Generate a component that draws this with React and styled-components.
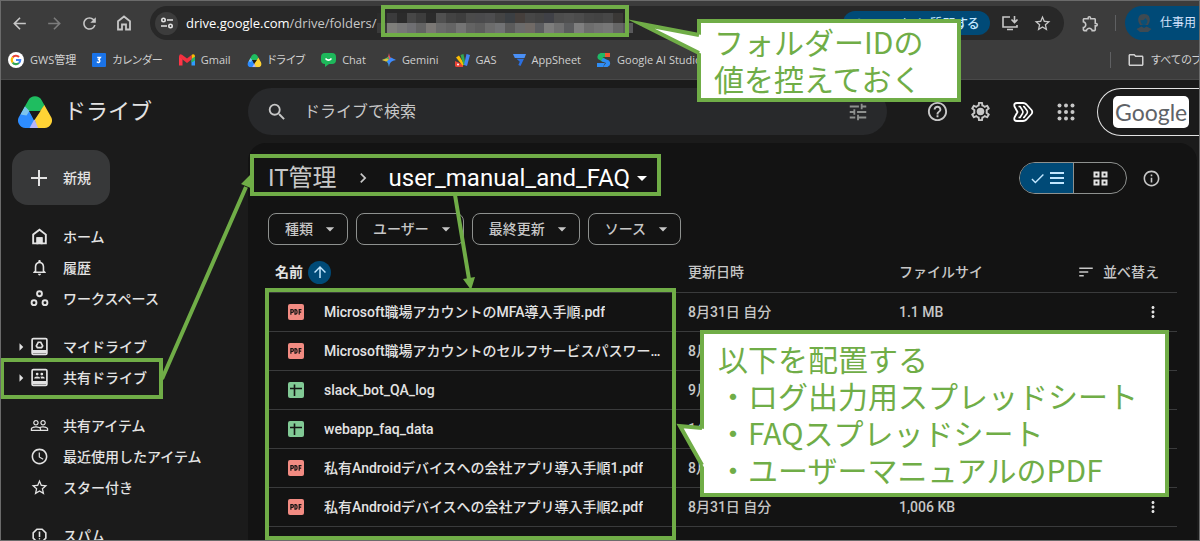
import styled, { createGlobalStyle } from "styled-components";
import {
  MdAccessTime,
  MdArrowBack,
  MdArrowDropDown,
  MdArrowForward,
  MdArrowRight,
  MdArrowUpward,
  MdCheck,
  MdChevronRight,
  MdHelpOutline,
  MdMoreVert,
  MdNotificationsNone,
  MdOutlineExtension,
  MdOutlineFolder,
  MdOutlineInfo,
  MdOutlineReport,
  MdOutlineSettings,
  MdPeopleOutline,
  MdRefresh,
  MdSearch,
  MdSort,
  MdStarOutline,
  MdTune,
} from "react-icons/md";

const GREEN = "#70ad47";

const DriveLogo = ({ size }) => (
  <svg width={size} height={size} viewBox="0 0 36 36" aria-hidden="true">
    <clipPath id={`drive${size}`}>
      <path d="M11.500 6a7.500 7.500 0 0 1 13 0l9.300 16.500A7.500 7.500 0 0 1 27.500 34h-19A7.500 7.500 0 0 1 2.200 22.500z" />
    </clipPath>
    <g clipPath={`url(#drive${size})`}>
      <path d="M0 0h36v8l-8 3-5 6H5z" fill="#1fbd60" />
      <path d="M0 17h12.500l9 19H0z" fill="#2d8cff" />
      <path d="M7.500 12l5 5-3 4.500-6-1z" fill="#7cc4ee" />
      <path d="M28 10l10 15v11H20.500L17.500 25z" fill="#ffd335" />
      <path d="M17.500 25l4 10H12z" fill="#b6b5fa" />
      <path d="M12 17h11.500l-6 9z" fill="#1b1b1b" />
    </g>
  </svg>
);

const GoogleMark = () => (
  <svg width="16" height="16" viewBox="0 0 24 24" aria-hidden="true">
    <circle cx="12" cy="12" r="12" fill="#fff" />
    <g fill="none" strokeWidth="3.200">
      <path d="M7 8.200A6.300 6.300 0 0 1 16.500 7.500" stroke="#ea4335" />
      <path d="M7 15.800a6.300 6.300 0 0 1 0-7.600" stroke="#fbbc04" />
      <path d="M16.300 16.600A6.300 6.300 0 0 1 7 15.800" stroke="#34a853" />
      <path d="M12 12h6.300a6.300 6.300 0 0 1-2 4.600" stroke="#4285f4" />
    </g>
  </svg>
);

const CalendarMark = () => (
  <svg width="14" height="14" viewBox="0 0 14 14" aria-hidden="true">
    <rect width="14" height="14" rx="1" fill="#1a73e8" />
    <path d="M5.200 4.500h3L6.700 6.500a1.500 1.500 0 1 1-1.700 2.200" fill="none" stroke="#fff" strokeWidth="1.500" />
  </svg>
);

const GmailMark = () => (
  <svg width="16" height="12" viewBox="0 0 16 12" aria-hidden="true">
    <path d="M0 2v9.500h3.500V5z" fill="#ff3547" />
    <path d="M12.500 5v6.500H16V2z" fill="#2f9bff" />
    <path d="M12.500 5l3.500-2.500v4l-3.500 2z" fill="#25b561" />
    <path d="M12.500 1v4L16 2.500V1.500Q14.500-.5 12.500 1z" fill="#fbbc04" />
    <path d="M0 2.500Q.5-.8 3 .8l5 3.700 4.500-3.500v4.500L8 9 3.500 5.500 0 3z" fill="#f3303f" />
  </svg>
);

const ChatMark = () => (
  <svg width="15" height="14" viewBox="0 0 15 14" aria-hidden="true">
    <path d="M4 0h7q4 0 4 4v3q0 4-4 4H8l-4 3v-3Q0 11 0 7V4q0-4 4-4z" fill="#1eb85b" />
    <path d="M4.500 5.500q3 3.200 6 0" fill="none" stroke="#fff" strokeWidth="1.600" />
  </svg>
);

const GeminiMark = () => (
  <svg width="14" height="14" viewBox="0 0 14 14" aria-hidden="true">
    <path d="M7 0Q7.500 6.500 14 7H0Q6.500 6.500 7 0z" fill="#f0525c" />
    <path d="M0 7Q6.500 7.500 7 14V3.500z" fill="#4dac5f" />
    <path d="M0 7l5-1.500L7 7l-3 1.500z" fill="#e9bd3b" />
    <path d="M14 7Q7.500 7.500 7 14 6.500 10 5 8.500L9 4.500z" fill="#3d8bfd" />
  </svg>
);

const ScriptMark = () => (
  <svg width="15" height="13" viewBox="0 0 15 13" aria-hidden="true">
    <path d="M0 7l8 3.500V13H2Q-.5 13 0 11z" fill="#ea4335" />
    <path d="M1 3.500l3-2 5.500 9-2 1z" fill="#fbbc04" />
    <path d="M5.500 1l3-1 2 10-2 1z" fill="#34a853" />
    <path d="M11.500 0l3.500 1-3 11-3-1z" fill="#4285f4" />
    <circle cx="3" cy="10.500" r="1" fill="#fff" />
  </svg>
);

const AppSheetMark = () => (
  <svg width="13" height="12" viewBox="0 0 13 12" aria-hidden="true">
    <path d="M0 0h13l-1.500 4H1.800z" fill="#4a90f7" />
    <path d="M3.500 4.800H11L7.500 12 5.300 11l1.500-3.200z" fill="#2b6fe0" />
  </svg>
);

const StudioMark = () => (
  <svg width="14" height="14" viewBox="0 0 14 14" aria-hidden="true">
    <path d="M3.500 0H13v4H5.500L9 6.500 6 9 1 6Q-1 2 3.500 0z" fill="#1fb866" />
    <path d="M8 0h5v4H8z" fill="#f0562f" />
    <path d="M6 5l6 2.500q3 4-1.500 6.500H6l3-4-5-2z" fill="#2f8df5" />
    <path d="M0 10h8l-2 4H0z" fill="#2f8df5" />
  </svg>
);

const HomeOutline = ({ size, filledDoor }) => (
  <svg width={size} height={size} viewBox="0 0 18 18" fill="none" stroke="currentColor" strokeWidth="1.800" aria-hidden="true">
    <path d="M3 7.200 9 2.500l6 4.700V15.500H11V10.500H7V15.500H3z" />
    {filledDoor && <path d="M7 10.500h4v5H7z" fill="currentColor" />}
  </svg>
);

const SiteSettings = () => (
  <svg width="14" height="14" viewBox="0 0 14 14" fill="none" stroke="currentColor" strokeWidth="1.600" aria-hidden="true">
    <circle cx="3.500" cy="4" r="1.700" />
    <path d="M7 4h6M1 10h6" />
    <circle cx="10.500" cy="10" r="1.700" />
  </svg>
);

const InstallIcon = () => (
  <svg width="18" height="16" viewBox="0 0 18 16" fill="none" stroke="currentColor" strokeWidth="1.600" aria-hidden="true">
    <path d="M9 2H2v10h14v-2M6 14.500h6M13.500 1v6M10.500 4.500l3 3 3-3" />
  </svg>
);

const Workspaces = () => (
  <svg width="18" height="18" viewBox="0 0 18 18" fill="none" stroke="currentColor" strokeWidth="1.800" aria-hidden="true">
    <circle cx="9" cy="4.500" r="2.300" />
    <circle cx="3.800" cy="13" r="2.300" />
    <circle cx="14.200" cy="13" r="2.300" />
  </svg>
);

const DriveBox = ({ shared }) => (
  <svg width="18" height="18" viewBox="0 0 18 18" fill="none" stroke="currentColor" strokeWidth="1.600" aria-hidden="true">
    <rect x="2" y="1.500" width="14" height="15" rx="1.200" />
    <path d="M2 13h14M2 14.500h14" />
    {shared ? (
      <g fill="currentColor" stroke="none">
        <circle cx="6.800" cy="5.800" r="1.300" />
        <circle cx="11.200" cy="5.800" r="1.300" />
        <path d="M4 10q0-2 2.800-2t2.800 2zM10.400 10q0-1.200-.6-1.700 4.200-1 4.200 1.700z" />
      </g>
    ) : (
      <path d="M7.800 5h2.400L12 8.500 11 10H7L6 8.500z" />
    )}
  </svg>
);

const GearIcon = () => (
  <svg width="23" height="23" viewBox="0 0 24 24" fill="currentColor" aria-hidden="true">
    <MdOutlineSettings size={24} stroke="currentColor" />
    <circle cx="12" cy="12" r="3.500" />
  </svg>
);

const LabsIcon = () => (
  <svg width="22" height="22" viewBox="0 0 22 22" fill="none" stroke="currentColor" strokeWidth="1.800" strokeLinejoin="round" aria-hidden="true">
    <path d="M5 2h6q2 0 3.500 1.500l5 5.500q1.500 2 0 4l-5 5.500Q13 20 11 20H5q-3.500 0-2.500-3.500L5.500 11 2.500 5.500Q1.500 2 5 2z" />
    <path d="M6.500 5.500h1.500l2.500 4q1 1.500 0 3l-2.500 4H6.500M11 5.500h1l3 4q1 1.500 0 3l-3 4h-1" strokeWidth="1.600" />
  </svg>
);

const AppsIcon = () => (
  <svg width="18" height="18" viewBox="0 0 18 18" fill="currentColor" aria-hidden="true">
    {[2.5, 9, 15.5].map((y) =>
      [2.5, 9, 15.5].map((x) => <circle key={`${x}-${y}`} cx={x} cy={y} r="2" />)
    )}
  </svg>
);

const GridIcon = () => (
  <svg width="15" height="15" viewBox="0 0 15 15" fill="none" stroke="currentColor" strokeWidth="2" aria-hidden="true">
    <path d="M1.500 1.500h4v4h-4zM9.500 1.500h4v4h-4zM1.500 9.500h4v4h-4zM9.500 9.500h4v4h-4z" />
  </svg>
);

const ListLines = () => (
  <svg width="14" height="14" viewBox="0 0 14 14" stroke="currentColor" strokeWidth="2" aria-hidden="true">
    <path d="M0 2h14M0 7h14M0 12h14" />
  </svg>
);

const PlusMark = () => (
  <svg width="18" height="18" viewBox="0 0 18 18" stroke="currentColor" strokeWidth="2" aria-hidden="true">
    <path d="M9 1v16M1 9h16" />
  </svg>
);

const Avatar = () => (
  <svg width="18" height="20" viewBox="0 0 18 20" aria-hidden="true">
    <path d="M3.500 9Q2 1 9 1t5.500 8L13 12H5z" fill="#3f4a52" />
    <path d="M5.500 7q3.500 1 5-2 1.500 2 2 2.500Q12 12 9 12T5.500 7z" fill="#0b4f76" />
    <path d="M1.500 16l5-2.500L9 15l2.500-1.500 5 2.500L13 19H5z" fill="#3f4a52" />
  </svg>
);

const PdfIcon = () => (
  <svg width="16" height="16" viewBox="0 0 16 16" role="img" aria-label="PDF">
    <rect width="16" height="16" rx="2" fill="#f28b82" />
    <g fill="none" stroke="#131313" strokeWidth="1.200">
      <path d="M2.900 10.800V5.700h1.500q1 0 1 1.300t-1 1.300H3" />
      <path d="M7 5.700v4.500h.8q1.300 0 1.300-2.200T7.800 5.700z" />
      <path d="M11.200 10.800V5.700h2.300M11.200 8.200h2" />
    </g>
  </svg>
);

const SheetIcon = () => (
  <svg width="16" height="16" viewBox="0 0 16 16" role="img" aria-label="Sheet">
    <rect width="16" height="16" rx="2" fill="#81c995" />
    <path d="M2 6.500h12M6.500 2.500V14" stroke="#131313" strokeWidth="1.600" />
  </svg>
);

const bookmarks = [
  { label: "GWS管理", icon: <GoogleMark /> },
  { label: "カレンダー", icon: <CalendarMark /> },
  { label: "Gmail", icon: <GmailMark /> },
  { label: "ドライブ", icon: <DriveLogo size={15} /> },
  { label: "Chat", icon: <ChatMark /> },
  { label: "Gemini", icon: <GeminiMark /> },
  { label: "GAS", icon: <ScriptMark /> },
  { label: "AppSheet", icon: <AppSheetMark /> },
  { label: "Google AI Studio", icon: <StudioMark /> },
];

const navGroups = [
  [
    { label: "ホーム", icon: <HomeOutline size={18} filledDoor /> },
    { label: "履歴", icon: <MdNotificationsNone /> },
    { label: "ワークスペース", icon: <Workspaces /> },
  ],
  [
    { label: "マイドライブ", icon: <DriveBox />, expandable: true },
    { label: "共有ドライブ", icon: <DriveBox shared />, expandable: true },
  ],
  [
    { label: "共有アイテム", icon: <MdPeopleOutline /> },
    { label: "最近使用したアイテム", icon: <MdAccessTime /> },
    { label: "スター付き", icon: <MdStarOutline /> },
  ],
  [{ label: "スパム", icon: <MdOutlineReport /> }],
];

const files = [
  { name: "Microsoft職場アカウントのMFA導入手順.pdf", type: "pdf", date: "8月31日 自分", size: "1.1 MB" },
  { name: "Microsoft職場アカウントのセルフサービスパスワードリセット手順.pdf", type: "pdf", date: "8月", size: "" },
  { name: "slack_bot_QA_log", type: "sheet", date: "9月", size: "" },
  { name: "webapp_faq_data", type: "sheet", date: "14:02", size: "" },
  { name: "私有Androidデバイスへの会社アプリ導入手順1.pdf", type: "pdf", date: "8月", size: "" },
  { name: "私有Androidデバイスへの会社アプリ導入手順2.pdf", type: "pdf", date: "8月31日 自分", size: "1,006 KB" },
];

const filters = ["種類", "ユーザー", "最終更新", "ソース"];

const mosaicTop = ["#2b2b2b", "#3b3b3c", "#2b2b2b", "#474747", "#3d3d3d", "#2b2b2b", "#505050", "#434343", "#3e3e3e", "#4b4b4b", "#4a4a4c", "#4d4d4f", "#444444", "#3b3f43", "#453f3c", "#474747", "#434343", "#404147", "#4d4d4d", "#505050", "#4c4c4c", "#454545", "#434343", "#474747", "#3a3836"];
const mosaicBottom = ["#3a3a3a", "#7f7f7b", "#777777", "#6f6f72", "#636363", "#7b7875", "#6a6a6a", "#646464", "#747474", "#636363", "#5d5d5d", "#6c6c6c", "#717274", "#5b5b5b", "#6b6b6b", "#706a66", "#5c5d60", "#7d7d7c", "#707070", "#5b5c5e", "#7f7f7f", "#6d6d6d", "#737373", "#777777", "#666666", "#59595b"];

const Mosaic = () => (
  <svg width="256" height="20" viewBox="0 0 26 2" preserveAspectRatio="none" shapeRendering="crispEdges" aria-hidden="true">
    {mosaicTop.map((color, i) => (
      <rect key={i} x={i} y="0" width="1" height="1" fill={color} />
    ))}
    {mosaicBottom.map((color, i) => (
      <rect key={i} x={i} y="1" width="1" height="1" fill={color} />
    ))}
  </svg>
);

const Browser = () => (
  <BrowserBar>
    <AddressRow>
      <NavButtons>
        <IconButton aria-label="戻る"><MdArrowBack /></IconButton>
        <IconButton aria-label="進む" $dim><MdArrowForward /></IconButton>
        <IconButton aria-label="再読み込み"><MdRefresh /></IconButton>
        <IconButton aria-label="ホーム"><HomeOutline size={18} /></IconButton>
      </NavButtons>
      <AddressBox>
        <SiteButton aria-label="サイト情報"><SiteSettings /></SiteButton>
        <Url><b>drive.google.com</b>/drive/folders/</Url>
        <Mosaic />
        <Spacer />
        <AskChip><MdSearch />Google に質問する</AskChip>
        <IconButton aria-label="インストール"><InstallIcon /></IconButton>
        <IconButton aria-label="ブックマーク"><MdStarOutline /></IconButton>
      </AddressBox>
      <Extensions>
        <IconButton aria-label="拡張機能"><MdOutlineExtension /></IconButton>
        <Divider />
      </Extensions>
      <Profile><Avatar />仕事用</Profile>
    </AddressRow>
    <BookmarkRow>
      {bookmarks.map((item) => (
        <Bookmark href="#" key={item.label}>{item.icon}{item.label}</Bookmark>
      ))}
      <Spacer />
      <Divider />
      <AllBookmarks href="#"><MdOutlineFolder />すべてのブックマーク</AllBookmarks>
    </BookmarkRow>
  </BrowserBar>
);

const TopBar = () => (
  <Header>
    <Brand href="#"><DriveLogo size={36} />ドライブ</Brand>
    <SearchBox>
      <MdSearch />
      <input aria-label="ドライブで検索" placeholder="ドライブで検索" />
      <MdTune color="#8e918f" />
    </SearchBox>
    <HeaderTools>
      <IconButton aria-label="サポート" $size={23}><MdHelpOutline /></IconButton>
      <IconButton aria-label="設定"><GearIcon /></IconButton>
      <IconButton aria-label="Labs" $bright><LabsIcon /></IconButton>
      <IconButton aria-label="アプリ"><AppsIcon /></IconButton>
    </HeaderTools>
    <Account><span>Google</span></Account>
  </Header>
);

const SideNav = () => (
  <Sidebar>
    <NewButton><PlusMark />新規</NewButton>
    {navGroups.map((group, i) => (
      <NavGroup key={i}>
        {group.map((item) => (
          <NavItem href="#" key={item.label}>
            <Expander>{item.expandable && <MdArrowRight />}</Expander>
            {item.icon}
            {item.label}
          </NavItem>
        ))}
      </NavGroup>
    ))}
  </Sidebar>
);

const FileList = () => (
  <Panel>
    <PathRow>
      <Crumb>IT管理</Crumb>
      <MdChevronRight />
      <Crumb $current>user_manual_and_FAQ<MdArrowDropDown /></Crumb>
      <Spacer />
      <ViewToggle>
        <ViewButton $active aria-label="リスト"><MdCheck /><ListLines /></ViewButton>
        <ViewButton aria-label="グリッド"><GridIcon /></ViewButton>
      </ViewToggle>
      <IconButton aria-label="詳細"><MdOutlineInfo /></IconButton>
    </PathRow>
    <FilterRow>
      {filters.map((label) => (
        <FilterChip key={label}>{label}<MdArrowDropDown /></FilterChip>
      ))}
    </FilterRow>
    <Table>
      <colgroup>
        <col />
        <col width="211" />
        <col width="168" />
        <col width="110" />
      </colgroup>
      <thead>
        <tr>
          <th><HeadCell $bright>名前<SortBadge><MdArrowUpward /></SortBadge></HeadCell></th>
          <th>更新日時</th>
          <th>ファイルサイ</th>
          <th><HeadCell $end><MdSort />並べ替え</HeadCell></th>
        </tr>
      </thead>
      <tbody>
        {files.map((file) => (
          <tr key={file.name}>
            <td>
              <FileName>
                {file.type === "pdf" ? <PdfIcon /> : <SheetIcon />}
                <span>{file.name}</span>
              </FileName>
            </td>
            <td>{file.date}</td>
            <td>{file.size}</td>
            <td><RowMenu aria-label="その他の操作"><MdMoreVert /></RowMenu></td>
          </tr>
        ))}
      </tbody>
    </Table>
  </Panel>
);

const Notes = () => (
  <>
    <Mark $x={381} $y={5} $w={248} $h={32} />
    <Mark $x={250} $y={154} $w={411} $h={42} />
    <Mark $x={0} $y={358} $w={163} $h={41} />
    <Mark $x={265} $y={288} $w={411} $h={252} />
    <Callout $x={697} $y={19} $w={264} $h={83}>
      フォルダーIDの
      <br />
      値を控えておく
    </Callout>
    <Callout $x={700} $y={330} $w={469} $h={167} $roomy>
      以下を配置する
      <br />
      ・ログ出力用スプレッドシート
      <br />
      ・FAQスプレッドシート
      <br />
      ・ユーザーマニュアルのPDF
    </Callout>
    <Lines width="1200" height="541" aria-hidden="true">
      <g stroke={GREEN} strokeWidth="4">
        <path d="M162 379L246 187M455 195l14 84" />
      </g>
      <g fill={GREEN}>
        <path d="M251 174l-10 10 12 5zM471 290l-8-11 12-2z" />
      </g>
      <g fill="#fff">
        <path d="M702 35L640 24 702 54zM705 429L680 426 705 469z" />
      </g>
      <g fill="none" stroke={GREEN} strokeWidth="4" strokeMiterlimit="10">
        <path d="M699 35L641 24 699 53" />
        <path d="M702 428L680 426 702 465" />
      </g>
    </Lines>
  </>
);

const App = () => (
  <Screen>
    <GlobalStyle />
    <Browser />
    <TopBar />
    <Body>
      <SideNav />
      <FileList />
    </Body>
    <Notes />
  </Screen>
);

export default App;

const GlobalStyle = createGlobalStyle`
  * {
    box-sizing: border-box;
  }
  body {
    margin: 0;
    background-color: #1b1b1b;
    font-family: Roboto, "Noto Sans CJK JP", sans-serif;
    font-size: 14px;
    line-height: 20px;
    color: #e3e3e3;
  }
  button, input {
    font: inherit;
    color: inherit;
    border: 0;
    padding: 0;
    background: none;
  }
  a {
    color: inherit;
    text-decoration: none;
  }
  svg {
    flex: none;
  }
`;

const Screen = styled.div`
  position: relative;
  display: flex;
  flex-direction: column;
  height: 100vh;
  overflow: hidden;
  border: 1px solid #6b6b6b;
`;

const Spacer = styled.div`
  flex: 1;
`;

const IconButton = styled.button`
  display: flex;
  align-items: center;
  justify-content: center;
  width: 24px;
  height: 24px;
  font-size: ${({ $size }) => $size || 19}px;
  color: ${({ $dim, $bright }) => ($dim ? "#7c7c7c" : $bright ? "#fff" : "#c7c7c7")};
`;

const Divider = styled.div`
  width: 1px;
  height: 16px;
  background-color: #5f6062;
`;

const BrowserBar = styled.div`
  flex: none;
  background-color: #3c3c3c;
  font-family: "Open Sans", "Noto Sans CJK JP", sans-serif;
  border-bottom: 1px solid #484848;
`;

const AddressRow = styled.div`
  display: flex;
  align-items: center;
  height: 44px;
  padding-left: 6px;
`;

const NavButtons = styled.div`
  display: flex;
  gap: 11px;
  margin-right: 14px;
`;

const AddressBox = styled.div`
  flex: 1;
  display: flex;
  align-items: center;
  height: 34px;
  padding: 0 10px 0 5px;
  gap: 8px;
  border-radius: 17px;
  background-color: #282828;
  & > svg {
    margin-left: -7px;
  }
`;

const SiteButton = styled.button`
  display: flex;
  align-items: center;
  justify-content: center;
  width: 23px;
  height: 23px;
  border-radius: 50%;
  color: #e3e3e3;
  background-color: #3c3c3c;
`;

const Url = styled.span`
  font-size: 13px;
  color: #c7c7c7;
  & > b {
    font-weight: 400;
    color: #fff;
  }
`;

const AskChip = styled.button`
  display: flex;
  align-items: center;
  height: 24px;
  padding: 0 11px;
  gap: 4px;
  border-radius: 12px;
  font-size: 13px;
  font-weight: 500;
  color: #c2e7ff;
  background-color: #004a77;
  font-feature-settings: "palt";
`;

const Extensions = styled.div`
  display: flex;
  align-items: center;
  gap: 13px;
  margin: 0 9px 0 14px;
`;

const Profile = styled.button`
  display: flex;
  align-items: center;
  height: 34px;
  width: 74px;
  padding-left: 10px;
  gap: 7px;
  white-space: nowrap;
  font-size: 12px;
  color: #d3e3fd;
  border-radius: 17px 0 0 17px;
  background-color: #004a77;
`;

const BookmarkRow = styled.nav`
  display: flex;
  align-items: center;
  height: 34px;
  padding: 0 0 4px 7px;
  gap: 16px;
  overflow: hidden;
  font-size: 11px;
  color: #d0d0d0;
`;

const Bookmark = styled.a`
  display: flex;
  align-items: center;
  gap: 6px;
  white-space: nowrap;
  font-feature-settings: "palt";
`;

const AllBookmarks = styled(Bookmark)`
  width: 72px;
  overflow: hidden;
  & > svg {
    font-size: 18px;
  }
`;

const Header = styled.header`
  flex: none;
  display: flex;
  align-items: center;
  height: 63px;
  padding-left: 16px;
`;

const Brand = styled.a`
  display: flex;
  align-items: center;
  width: 231px;
  gap: 11px;
  font-size: 22px;
`;

const SearchBox = styled.label`
  flex: 1;
  display: flex;
  align-items: center;
  height: 47px;
  padding: 0 18px;
  border-radius: 24px;
  font-size: 22px;
  color: #c7c7c7;
  background-color: #28292b;
  & > input {
    flex: 1;
    min-width: 0;
    margin-left: 16px;
    font-size: 16px;
  }
  & > input::placeholder {
    color: #c7c7c7;
  }
`;

const HeaderTools = styled.div`
  display: flex;
  gap: 19px;
  margin: 0 19px 0 38px;
`;

const Account = styled.div`
  display: flex;
  align-items: center;
  width: 102px;
  height: 48px;
  padding-left: 15px;
  border: 1px solid #e3e3e3;
  border-right: 0;
  border-radius: 24px 0 0 24px;
  & > span {
    padding: 0 2px;
    border-radius: 5px;
    font-family: Lato, sans-serif;
    font-size: 23px;
    line-height: 32px;
    color: #5f6368;
    background-color: #fff;
  }
`;

const Body = styled.div`
  flex: 1;
  display: flex;
  min-height: 0;
`;

const Sidebar = styled.nav`
  width: 247px;
  padding: 7px 11px 0;
`;

const NewButton = styled.button`
  display: flex;
  align-items: center;
  width: 98px;
  height: 55px;
  padding-left: 18px;
  gap: 15px;
  margin-bottom: 16px;
  border-radius: 16px;
  font-weight: 500;
  background-color: #373839;
`;

const NavGroup = styled.div`
  margin-bottom: 17px;
`;

const NavItem = styled.a`
  display: flex;
  align-items: center;
  height: 31px;
  font-weight: 500;
  white-space: nowrap;
  & > svg {
    width: 19px;
    height: 19px;
    margin-right: 14px;
  }
`;

const Expander = styled.span`
  display: flex;
  justify-content: flex-end;
  width: 18px;
  font-size: 18px;
`;

const Panel = styled.main`
  flex: 1;
  min-width: 0;
  margin-right: 2px;
  padding: 0 20px;
  border-radius: 18px 18px 0 0;
  background-color: #131313;
`;

const PathRow = styled.div`
  display: flex;
  align-items: center;
  height: 70px;
  font-size: 20px;
  color: #c7c7c7;
  & > svg {
    margin: 0 16px;
  }
  & > button:last-child {
    margin: 0 14px 0 12px;
  }
`;

const Crumb = styled.button`
  display: flex;
  align-items: center;
  font-size: 24px;
  line-height: 36px;
  color: ${({ $current }) => ($current ? "#fff" : "#c7c7c7")};
`;

const ViewToggle = styled.div`
  display: flex;
  height: 32px;
  border: 1px solid #8e918f;
  border-radius: 16px;
  overflow: hidden;
`;

const ViewButton = styled.button`
  display: flex;
  align-items: center;
  justify-content: center;
  gap: 4px;
  width: 53px;
  font-size: 17px;
  color: ${({ $active }) => ($active ? "#c2e7ff" : "#e3e3e3")};
  background-color: ${({ $active }) => ($active ? "#004a77" : "transparent")};
  & + & {
    border-left: 1px solid #8e918f;
  }
`;

const FilterRow = styled.div`
  display: flex;
  gap: 8px;
  margin-bottom: 8px;
`;

const FilterChip = styled.button`
  display: flex;
  align-items: center;
  height: 32px;
  padding: 0 7px 0 16px;
  gap: 7px;
  border: 1px solid #8e918f;
  border-radius: 8px;
  font-weight: 500;
  color: #c7c7c7;
  & > svg {
    font-size: 20px;
  }
`;

const Table = styled.table`
  width: 100%;
  table-layout: fixed;
  border-collapse: collapse;
  text-align: left;
  color: #c7c7c7;
  & th, & td {
    height: 39px;
    padding: 0;
    font-weight: 500;
    border-bottom: 1px solid #3a3b3c;
  }
`;

const HeadCell = styled.div`
  display: flex;
  align-items: center;
  justify-content: ${({ $end }) => ($end ? "flex-end" : "flex-start")};
  gap: ${({ $end }) => ($end ? 8 : 5)}px;
  padding: ${({ $end }) => ($end ? "0 18px 0 0" : "0 0 0 7px")};
  color: ${({ $bright }) => ($bright ? "#e3e3e3" : "#c7c7c7")};
  font-weight: ${({ $bright }) => ($bright ? 700 : 500)};
  & > svg {
    font-size: 18px;
  }
`;

const SortBadge = styled.span`
  display: flex;
  align-items: center;
  justify-content: center;
  width: 23px;
  height: 23px;
  border-radius: 50%;
  font-size: 18px;
  color: #c2e7ff;
  background-color: #004a77;
`;

const FileName = styled.div`
  display: flex;
  align-items: center;
  gap: 20px;
  padding: 0 20px;
  color: #e3e3e3;
  & > span {
    overflow: hidden;
    text-overflow: ellipsis;
    white-space: nowrap;
  }
`;

const RowMenu = styled.button`
  display: flex;
  margin: 0 15px 0 auto;
  font-size: 18px;
  color: #e3e3e3;
`;

const Mark = styled.div`
  position: absolute;
  left: ${({ $x }) => $x - 1}px;
  top: ${({ $y }) => $y - 1}px;
  width: ${({ $w }) => $w}px;
  height: ${({ $h }) => $h}px;
  border: 4px solid ${GREEN};
`;

const Callout = styled(Mark)`
  padding: ${({ $roomy }) => ($roomy ? "6px 14px" : "0 13px")};
  font-family: "Noto Sans CJK JP", sans-serif;
  font-size: 30px;
  line-height: 37px;
  white-space: nowrap;
  color: ${GREEN};
  background-color: #fff;
`;

const Lines = styled.svg`
  position: absolute;
  left: -1px;
  top: -1px;
`;
